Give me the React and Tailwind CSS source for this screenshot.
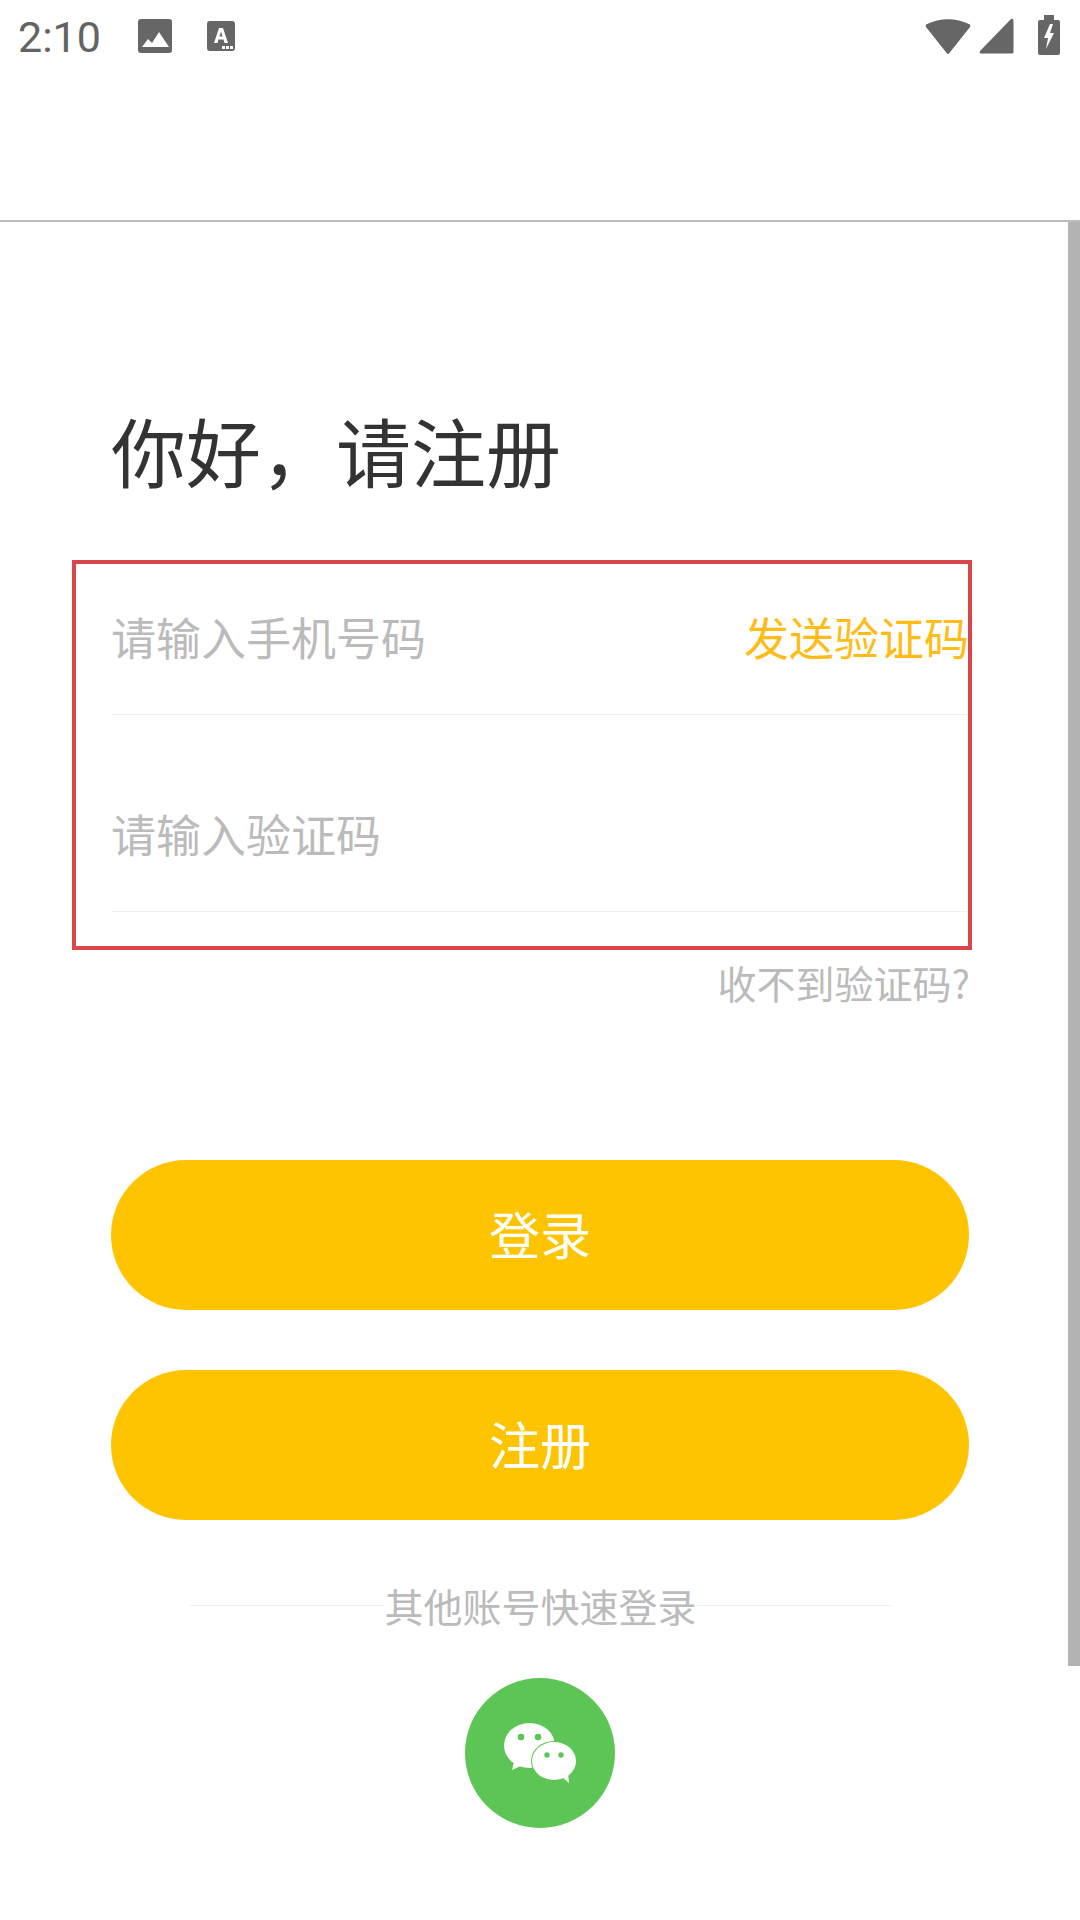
import React from "react";

const cjk = "font-['Noto_Sans_CJK_SC','Noto_Sans',sans-serif]";

function StatusBar() {
  return (
    <div className="flex h-[60px] items-start justify-between pt-[15px]">
      <div className="flex items-center">
        <span className="ml-[18px] w-[120px] font-['Roboto',sans-serif] text-[43px] font-normal leading-[44px] text-[#636363]">2:10</span>
        <svg width="34" height="34" viewBox="0 0 34 34" className="mb-[2px]">
          <rect width="34" height="34" rx="3" fill="#666666" />
          <path d="M4 28 L10 20 L14 24 L21 13 L31 28 Z" fill="#ffffff" />
        </svg>
        <svg width="28" height="30" viewBox="0 0 28 30" className="mb-[2px] ml-[35px]">
          <rect width="28" height="30" rx="3" fill="#666666" />
          <path d="M7 22 L12 7 H16 L21 22 H17.500 L16.500 18.500 H11.500 L10.500 22 Z M12.500 15.500 H15.500 L14 10.500 Z" fill="#ffffff" fillRule="evenodd" />
          <rect x="15" y="25" width="3" height="3" fill="#ffffff" />
          <rect x="19" y="25" width="3" height="3" fill="#ffffff" />
          <rect x="23" y="25" width="3" height="3" fill="#ffffff" />
        </svg>
      </div>
      <div className="flex items-start pr-[20px]">
        <svg width="46" height="38" viewBox="0 0 46 38" className="mt-[2px]">
          <path d="M1 7.500 Q23 -3 45 7.500 Q45.500 8.500 45 10 L24 36.500 Q23 37.500 22 36.500 L1 10 Q0.500 8.500 1 7.500 Z" fill="#666666" />
        </svg>
        <svg width="35" height="36" viewBox="0 0 35 36" className="ml-[8px] mt-[3px]">
          <path d="M1 33 L32 1 Q34.500 0 34.500 3 V34 Q34.500 35.500 33 35.500 H2 Q0 35 1 33 Z" fill="#666666" />
        </svg>
        <svg width="22" height="40" viewBox="0 0 22 40" className="ml-[24px]">
          <path d="M6 0 H16 V5 H20 Q22 5 22 7 V38 Q22 40 20 40 H2 Q0 40 0 38 V7 Q0 5 2 5 H6 Z" fill="#666666" />
          <path d="M12 9 L6 23 H10 L8 34 L16 18 H12 L15 9 Z" fill="#ffffff" />
        </svg>
      </div>
    </div>
  );
}

function WeChat() {
  return (
    <svg width="150" height="150" viewBox="0 0 150 150">
      <circle cx="75" cy="75" r="75" fill="#5dc555" />
      <ellipse cx="64.500" cy="67.500" rx="25.500" ry="22.500" fill="#ffffff" />
      <path d="M49 84 L47 92 L58 87 Z" fill="#ffffff" />
      <ellipse cx="89" cy="83" rx="23" ry="20" fill="#5dc555" />
      <ellipse cx="89" cy="83" rx="22" ry="19" fill="#ffffff" />
      <path d="M97 99 L104 105 L103 95 Z" fill="#ffffff" />
      <circle cx="56" cy="59" r="3.300" fill="#5dc555" />
      <circle cx="73" cy="59" r="3.300" fill="#5dc555" />
      <circle cx="82" cy="77" r="2.700" fill="#5dc555" />
      <circle cx="96" cy="77" r="2.700" fill="#5dc555" />
    </svg>
  );
}

export default function App() {
  return (
    <div className={`relative h-[1920px] w-[1080px] overflow-hidden bg-white ${cjk}`}>
      <StatusBar />
      <div className="h-[162px] border-b-2 border-[#bdbdbd]" />
      <div className="absolute right-0 top-[222px] h-[1444px] w-[12px] bg-[#b3b3b3]" />

      <main className="flex flex-col">
        <h1 className="ml-[111px] mt-[178px] h-[100px] text-[75px] font-normal leading-[100px] text-[#333333]">你好，请注册</h1>

        <section className="ml-[72px] mt-[60px] h-[390px] w-[900px] border-4 border-[#d9474b] pb-[35px] pl-[36px]">
          <div className="flex h-[151px] items-center justify-between border-b border-[#eeeeee] pb-[5px]">
            <span className="-ml-[1px] text-[45px] leading-[60px] text-[#bbbbbb]">请输入手机号码</span>
            <span className="-mr-[1px] text-[45px] leading-[60px] text-[#ffbb16]">发送验证码</span>
          </div>
          <div className="mt-[45px] flex h-[152px] items-center border-b border-[#eeeeee] pb-[4px]">
            <span className="-ml-[1px] text-[45px] leading-[60px] text-[#bbbbbb]">请输入验证码</span>
          </div>
        </section>

        <div className="mt-[2px] flex h-[60px] w-[970px] items-center justify-end text-[39px] leading-[60px] text-[#bbbbbb]">收不到验证码?</div>

        <div className="ml-[111px] mt-[148px] flex w-[858px] flex-col gap-[60px]">
          <button className="h-[150px] rounded-full bg-[#ffc400] pb-[3px] text-[51px] text-white">登录</button>
          <button className="h-[150px] rounded-full bg-[#ffc400] pb-[3px] text-[51px] text-white">注册</button>
        </div>

        <div className="ml-[190px] mt-[60px] flex h-[50px] w-[701px] items-center">
          <div className="h-px flex-1 bg-[#eeeeee]" />
          <span className="text-[39px] leading-[50px] text-[#bbbbbb]">其他账号快速登录</span>
          <div className="h-px flex-1 bg-[#eeeeee]" />
        </div>

        <div className="mt-[48px] flex justify-center">
          <WeChat />
        </div>
      </main>
    </div>
  );
}
